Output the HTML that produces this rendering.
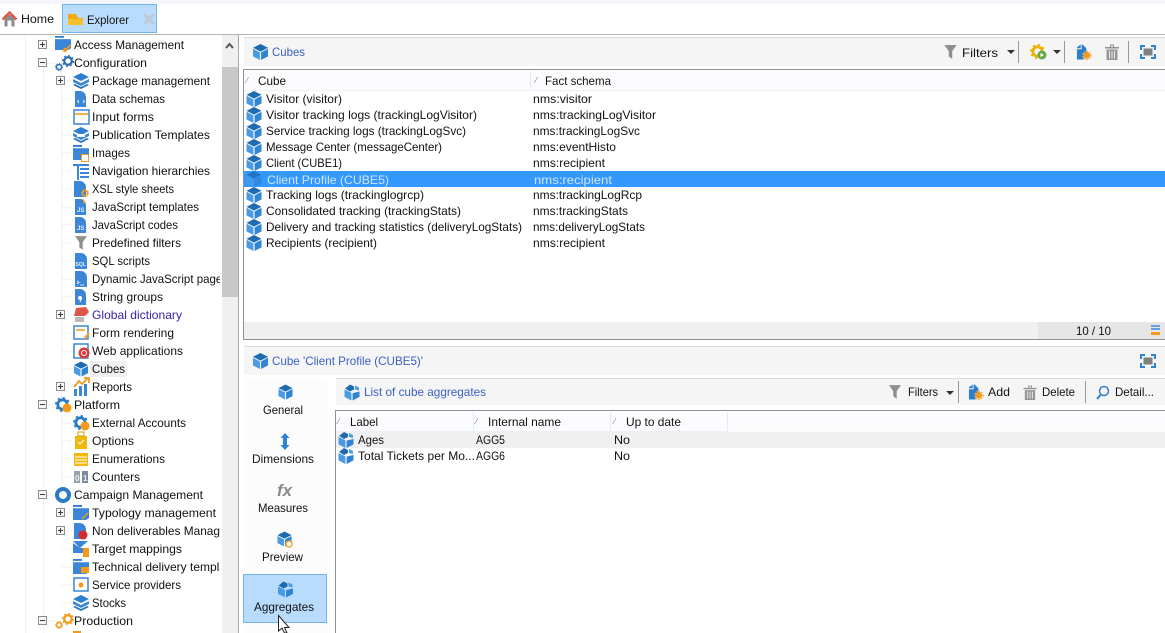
<!DOCTYPE html>
<html><head><meta charset="utf-8"><style>
html,body{margin:0;padding:0;background:#fff;width:1165px;height:633px;overflow:hidden}
svg{display:block}
text{font-family:"Liberation Sans",sans-serif;font-size:12px;fill:#111}
.t{fill:#3b5fc4}
.m{font-size:8px;fill:#777}
.i{font-size:6px;font-weight:bold;fill:#e6f0fb}
</style></head><body>
<svg width="1165" height="633" viewBox="0 0 1165 633" xmlns="http://www.w3.org/2000/svg">
<defs>
<clipPath id="tc"><rect x="0" y="34" width="220" height="600"/></clipPath>
<symbol id="cube" viewBox="0 0 16 16" overflow="visible"><path d="M8 0L15.500 3.800L8 7.600L.5 3.800Z" fill="#1f6bb0"/><path d="M.5 4.800L7.400 8.400V16L.5 12.400Z" fill="#4a9be3"/><path d="M15.500 4.800L8.600 8.400V16L15.500 12.400Z" fill="#2f84d3"/></symbol>
<symbol id="agg" viewBox="0 0 16 16" overflow="visible"><path d="M6 0L10 2V5L6 7L1 4Z" fill="#1f6bb0"/><path d="M11 1L15 3V6L11 5Z" fill="#4a9be3"/><path d="M.5 5L7.400 8.400V16L.5 12.400Z" fill="#4a9be3"/><path d="M15.500 7L8.600 8.600V16L15.500 12.400Z" fill="#2f84d3"/></symbol>
<symbol id="doc" viewBox="0 0 12 16" preserveAspectRatio="none" overflow="visible"><path d="M0 0H7L12 5V16H0Z" fill="#3b86d6"/><path d="M8 0L12 4H8Z" fill="#2f7fd0"/></symbol>
<symbol id="folder" viewBox="0 0 16 16" preserveAspectRatio="none" overflow="visible"><rect x="0" y="0" width="9" height="2" fill="#2f7fd0"/><path d="M0 3.500H16V14L13 16H0Z" fill="#3b86d6"/></symbol>
<symbol id="gear" viewBox="0 0 16 16" overflow="visible"><circle cx="8" cy="8" r="5" fill="none" stroke="currentColor" stroke-width="3"/><circle cx="8" cy="8" r="7" fill="none" stroke="currentColor" stroke-width="2" stroke-dasharray="2.400 3.100"/></symbol>
<symbol id="stack" viewBox="0 0 16 16" overflow="visible"><path d="M8 0L16 4L8 8L0 4Z" fill="#2f7fd0"/><path d="M0 6L8 10L16 6V9L8 13L0 9Z" fill="#3b86d6"/><path d="M2 11L8 14L14 11L16 12L8 16L0 12Z" fill="#2a73bd"/></symbol>
<symbol id="funnel" viewBox="0 0 14 16" overflow="visible"><path d="M0 0H14L9 7V16L5 13V7Z" fill="#8f8f8f"/></symbol>
<symbol id="trash" viewBox="0 0 14 16" overflow="visible"><path d="M0 3H14V4.500H0ZM5 .5H9V3H8V1.500H6V3H5Z" fill="#8f8f8f"/><path d="M1.500 5.500H12.500V16H1.500Z" fill="#959595"/><path d="M4.500 7V14.500M7 7V14.500M9.500 7V14.500" stroke="#eee" stroke-width="1"/></symbol>
<symbol id="fit" viewBox="0 0 16 14" overflow="visible"><path d="M1 5V1H5M11 1H15V5M15 9V13H11M5 13H1V9" fill="none" stroke="#2f84d8" stroke-width="2"/><rect x="3.500" y="3.500" width="9" height="7" fill="#808080"/></symbol>
<symbol id="add" viewBox="0 0 16 16" overflow="visible"><path d="M1 3L5 0V4H1ZM6 0H7L11 4V9H8V16H1V5H6Z" fill="#2f7fd0"/><circle cx="11.500" cy="11.500" r="3.500" fill="#f29a1e"/><circle cx="11.500" cy="11.500" r="4.500" fill="none" stroke="#f29a1e" stroke-width="1.200" stroke-dasharray="1.500 1.500"/></symbol>
<symbol id="plus" viewBox="0 0 9 9" overflow="visible"><rect x=".5" y=".5" width="8" height="8" fill="#f6f6f6" stroke="#8d8d8d"/><path d="M2 4.500H7M4.500 2V7" stroke="#3a3a3a"/></symbol>
<symbol id="minus" viewBox="0 0 9 9" overflow="visible"><rect x=".5" y=".5" width="8" height="8" fill="#f6f6f6" stroke="#8d8d8d"/><path d="M2 4.500H7" stroke="#3a3a3a"/></symbol>
</defs>

<!-- top bar -->
<rect width="1165" height="4" fill="#f3f5f9"/>
<rect y="4" width="1165" height="30" fill="#fff"/>
<rect y="34" width="1165" height="1" fill="#b5b5b5"/>
<path d="M4.500 15H14.500V26.500H11.500V20.500H7.500V26.500H4.500Z" fill="#8c8c8c"/><path d="M2.500 19.500L9.500 12.500L16.500 19.500" fill="none" stroke="#e0574a" stroke-width="2.400"/>
<text x="21" y="23" textLength="33" lengthAdjust="spacingAndGlyphs">Home</text>
<rect x="62.500" y="4.500" width="94" height="28" fill="#b9dcfd" stroke="#74b2ee"/>
<path d="M68 14V25H83V18H78L76 14Z" fill="#f4a90f"/><path d="M68 19H83V25H68Z" fill="#f6c02c"/>
<text x="87" y="24" textLength="42" lengthAdjust="spacingAndGlyphs">Explorer</text>
<path d="M144 14L154 24M154 14L144 24" stroke="#bfc9d2" stroke-width="3"/>

<!-- tree -->
<g stroke="#f1f1f1" fill="none">
<path d="M25.500 35V633M43.500 54V633M61.500 35V512M43.500 45H56M43.500 63H56M43.500 405H56M43.500 495H56M43.500 621H56"/>
<path d="M61.500 81H72M61.500 99H72M61.500 117H72M61.500 135H72M61.500 153H72M61.500 171H72M61.500 189H72M61.500 207H72M61.500 225H72M61.500 243H72M61.500 261H72M61.500 279H72M61.500 297H72M61.500 315H72M61.500 333H72M61.500 351H72M61.500 369H72M61.500 387H72M61.500 423H72M61.500 441H72M61.500 459H72M61.500 477H72M61.500 513H72M61.500 531H72M61.500 549H72M61.500 567H72M61.500 585H72M61.500 603H72"/>
</g>
<use href="#plus" x="38" y="40" width="9" height="9"/>
<use href="#minus" x="38" y="58" width="9" height="9"/>
<use href="#plus" x="56" y="76" width="9" height="9"/>
<use href="#plus" x="56" y="310" width="9" height="9"/>
<use href="#plus" x="56" y="382" width="9" height="9"/>
<use href="#minus" x="38" y="400" width="9" height="9"/>
<use href="#minus" x="38" y="490" width="9" height="9"/>
<use href="#plus" x="56" y="508" width="9" height="9"/>
<use href="#plus" x="56" y="526" width="9" height="9"/>
<use href="#minus" x="38" y="616" width="9" height="9"/>

<!-- tree icons -->
<use href="#folder" x="55" y="36" width="16" height="14"/><path d="M64 51L71 45" stroke="#f29a1e" stroke-width="1.800"/><circle cx="65" cy="50" r="2.200" fill="#f29a1e"/>
<g color="#2c6fb3"><use href="#gear" x="62" y="55" width="12" height="12"/><use href="#gear" x="55" y="63" width="8" height="8"/></g>
<use href="#stack" x="73" y="73" width="16" height="16"/>
<use href="#doc" x="75" y="91" width="11" height="16"/><path d="M79 100L77.500 101.500L79 103M83 100L84.500 101.500L83 103" stroke="#fff" fill="none" stroke-width=".8"/>
<rect x="74" y="110" width="15" height="14" fill="#fff" stroke="#3b86d6" stroke-width="1.500"/><rect x="75" y="113" width="13" height="2" fill="#f4b24a"/>
<use href="#stack" x="73" y="127" width="16" height="16"/><rect x="77" y="134" width="8" height="3" fill="#fff"/>
<use href="#folder" x="73" y="145" width="16" height="15"/><rect x="81.500" y="154.500" width="7" height="7" fill="#fff" stroke="#f29a1e"/>
<path d="M73 164H89V166H73ZM77 166H79V180H77ZM80 168H89V170H80ZM80 172H89V174H80ZM80 176H89V178H80Z" fill="#3b86d6"/>
<use href="#doc" x="74" y="181" width="12" height="16"/><use href="#gear" x="81" y="189" width="8" height="8" color="#f29a1e"/>
<use href="#doc" x="75" y="199" width="11" height="16"/><path d="M83 199L86 203H83Z" fill="#f29a1e"/><text x="77" y="212" class="i">JS</text>
<use href="#doc" x="75" y="217" width="11" height="16"/><text x="77" y="230" class="i">JS</text>
<use href="#funnel" x="75" y="236" width="12" height="14"/>
<use href="#doc" x="75" y="253" width="12" height="16"/><text x="75.500" y="266" class="i" style="font-size:5px">SQL</text>
<use href="#doc" x="75" y="271" width="12" height="16"/><path d="M77 281L79 282.500L77 284M80 285H84" stroke="#fff" fill="none" stroke-width=".8"/>
<use href="#doc" x="75" y="289" width="11" height="16"/><circle cx="80" cy="298" r="2" fill="#fff"/><path d="M81.500 298L80 302" stroke="#fff"/>
<path d="M76 308L86 307L89 312L85 316L74 316Z" fill="#e0574a"/><rect x="75" y="317" width="9" height="5" fill="#bbb"/>
<rect x="74" y="326" width="14" height="13" fill="#fff" stroke="#3b86d6" stroke-width="1.500"/><path d="M76 330H85" stroke="#f4b24a" stroke-width="2"/><path d="M84 339L89 333" stroke="#f29a1e" stroke-width="2"/>
<rect x="74" y="344" width="14" height="14" fill="#fff" stroke="#3b86d6" stroke-width="1.500"/><circle cx="84" cy="353" r="5.500" fill="#d93a3a"/><circle cx="84" cy="353" r="2.500" fill="none" stroke="#fff"/>
<rect x="90" y="361" width="37" height="16" fill="#f0f0f0"/>
<use href="#cube" x="73.500" y="361" width="15" height="16"/>
<path d="M74 396V389H77V396ZM79 396V386H82V396ZM84 396V384H87V396Z" fill="#3b86d6"/><path d="M74 387L79 381L82 384L88 378M84 378H89V383" fill="none" stroke="#f29a1e" stroke-width="1.800"/>
<use href="#gear" x="55" y="397" width="15" height="15" color="#2c7ac7"/><circle cx="67" cy="408" r="4.500" fill="#f29a1e"/>
<use href="#gear" x="73" y="415" width="15" height="15" color="#2c7ac7"/><circle cx="85" cy="426" r="4.500" fill="#f29a1e"/>
<rect x="75" y="436" width="12" height="13" fill="#efb90c"/><rect x="78" y="432" width="6" height="4" fill="none" stroke="#c8a00b"/><path d="M78 442L80 444L84 440" stroke="#fff" fill="none"/>
<rect x="74" y="453" width="14" height="13" fill="#efb90c"/><path d="M75 457H87M75 460H87M75 463H87" stroke="#fff"/>
<rect x="74" y="471" width="6" height="12" fill="#9aa3ad"/><rect x="82" y="471" width="6" height="12" fill="#7c8a99"/><text x="75" y="481" class="i" style="font-size:8px">0</text><text x="83" y="481" class="i" style="font-size:8px">1</text>
<circle cx="63" cy="495" r="6" fill="none" stroke="#2c7ac7" stroke-width="4"/>
<use href="#folder" x="73" y="505" width="16" height="15"/><path d="M82 519L88 513" stroke="#f29a1e" stroke-width="1.500"/>
<use href="#doc" x="74" y="523" width="12" height="16"/><circle cx="83" cy="535" r="4.500" fill="#d42b2b"/>
<path d="M73 541H88L80 548ZM73 543V553H84V548H80Z" fill="#3b86d6"/><rect x="83" y="548" width="6" height="9" fill="#f29a1e"/>
<use href="#folder" x="73" y="559" width="16" height="15"/><rect x="81" y="567" width="8" height="6" fill="#f29a1e"/>
<rect x="74" y="578" width="14" height="13" fill="#fff" stroke="#3b86d6" stroke-width="1.500"/><circle cx="81" cy="585" r="2.500" fill="#f29a1e"/>
<use href="#stack" x="73" y="595" width="16" height="16"/>
<g color="#f29a1e"><use href="#gear" x="62" y="613" width="12" height="12"/><use href="#gear" x="55" y="621" width="8" height="8"/></g>
<rect x="73" y="631" width="8" height="2" fill="#f29a1e"/>

<!-- tree text -->
<g clip-path="url(#tc)">
<text x="74" y="49" textLength="110" lengthAdjust="spacingAndGlyphs">Access Management</text>
<text x="74" y="67" textLength="73" lengthAdjust="spacingAndGlyphs">Configuration</text>
<text x="92" y="85" textLength="118" lengthAdjust="spacingAndGlyphs">Package management</text>
<text x="92" y="103" textLength="73" lengthAdjust="spacingAndGlyphs">Data schemas</text>
<text x="92" y="121" textLength="62" lengthAdjust="spacingAndGlyphs">Input forms</text>
<text x="92" y="139" textLength="118" lengthAdjust="spacingAndGlyphs">Publication Templates</text>
<text x="92" y="157" textLength="38" lengthAdjust="spacingAndGlyphs">Images</text>
<text x="92" y="175" textLength="118" lengthAdjust="spacingAndGlyphs">Navigation hierarchies</text>
<text x="92" y="193" textLength="82" lengthAdjust="spacingAndGlyphs">XSL style sheets</text>
<text x="92" y="211" textLength="107" lengthAdjust="spacingAndGlyphs">JavaScript templates</text>
<text x="92" y="229" textLength="86" lengthAdjust="spacingAndGlyphs">JavaScript codes</text>
<text x="92" y="247" textLength="89" lengthAdjust="spacingAndGlyphs">Predefined filters</text>
<text x="92" y="265" textLength="58" lengthAdjust="spacingAndGlyphs">SQL scripts</text>
<text x="92" y="283" textLength="136" lengthAdjust="spacingAndGlyphs">Dynamic JavaScript pages</text>
<text x="92" y="301" textLength="71" lengthAdjust="spacingAndGlyphs">String groups</text>
<text x="92" y="319" textLength="90" lengthAdjust="spacingAndGlyphs" style="fill:#3a1fa8">Global dictionary</text>
<text x="92" y="337" textLength="82" lengthAdjust="spacingAndGlyphs">Form rendering</text>
<text x="92" y="355" textLength="91" lengthAdjust="spacingAndGlyphs">Web applications</text>
<text x="92" y="373" textLength="33" lengthAdjust="spacingAndGlyphs">Cubes</text>
<text x="92" y="391" textLength="40" lengthAdjust="spacingAndGlyphs">Reports</text>
<text x="74" y="409" textLength="46" lengthAdjust="spacingAndGlyphs">Platform</text>
<text x="92" y="427" textLength="94" lengthAdjust="spacingAndGlyphs">External Accounts</text>
<text x="92" y="445" textLength="42" lengthAdjust="spacingAndGlyphs">Options</text>
<text x="92" y="463" textLength="73" lengthAdjust="spacingAndGlyphs">Enumerations</text>
<text x="92" y="481" textLength="48" lengthAdjust="spacingAndGlyphs">Counters</text>
<text x="74" y="499" textLength="129" lengthAdjust="spacingAndGlyphs">Campaign Management</text>
<text x="92" y="517" textLength="124" lengthAdjust="spacingAndGlyphs">Typology management</text>
<text x="92" y="535" textLength="161" lengthAdjust="spacingAndGlyphs">Non deliverables Management</text>
<text x="92" y="553" textLength="90" lengthAdjust="spacingAndGlyphs">Target mappings</text>
<text x="92" y="571" textLength="150" lengthAdjust="spacingAndGlyphs">Technical delivery templates</text>
<text x="92" y="589" textLength="89" lengthAdjust="spacingAndGlyphs">Service providers</text>
<text x="92" y="607" textLength="34" lengthAdjust="spacingAndGlyphs">Stocks</text>
<text x="74" y="625" textLength="59" lengthAdjust="spacingAndGlyphs">Production</text>
</g>

<!-- scrollbar -->
<rect x="222" y="35" width="16" height="598" fill="#f0f0f0"/>
<rect x="222" y="67" width="16" height="230" fill="#c8c8c8"/>
<path d="M226 48L229.500 44L233 48" fill="none" stroke="#555" stroke-width="2"/>
<rect x="238" y="35" width="1" height="598" fill="#a8a8a8"/>

<!-- Cubes panel -->
<rect x="244" y="37" width="921" height="29" fill="#f5f5f5"/>
<rect x="244" y="37" width="921" height="1" fill="#dcdcdc"/>
<use href="#cube" x="252.500" y="43.500" width="16" height="17"/>
<text x="272" y="56" class="t" textLength="33" lengthAdjust="spacingAndGlyphs">Cubes</text>
<use href="#funnel" x="944" y="45" width="13" height="14"/>
<text x="962" y="57" textLength="36" lengthAdjust="spacingAndGlyphs">Filters</text>
<path d="M1007 50H1015L1011 54Z" fill="#333"/>
<rect x="1018" y="41" width="1" height="22" fill="#9a9a9a"/>
<use href="#gear" x="1030" y="44" width="15" height="15" color="#e9b400"/><circle cx="1042" cy="55" r="4.500" fill="#6aa84f"/><path d="M1040.500 53V57L1044 55Z" fill="#fff"/>
<path d="M1053 50H1061L1057 54Z" fill="#333"/>
<rect x="1064" y="41" width="1" height="22" fill="#9a9a9a"/>
<use href="#add" x="1076" y="44" width="15" height="16"/>
<use href="#trash" x="1105" y="44" width="14" height="16"/>
<rect x="1128" y="41" width="1" height="22" fill="#9a9a9a"/>
<use href="#fit" x="1140" y="45" width="16" height="14"/>

<!-- Cubes table -->
<rect x="243.500" y="69.500" width="925" height="270" fill="#fff" stroke="#8b9098"/>
<rect x="244" y="70" width="921" height="20" fill="#fcfcfe"/>
<rect x="244" y="90" width="921" height="1" fill="#e8f0f8"/>
<rect x="530" y="71" width="1" height="19" fill="#e3ebf3"/>
<text x="246.500" y="83" class="m">⁄</text>
<text x="535.500" y="83" class="m">⁄</text>
<text x="258" y="85" textLength="28" lengthAdjust="spacingAndGlyphs">Cube</text>
<text x="545" y="85" textLength="66" lengthAdjust="spacingAndGlyphs">Fact schema</text>
<rect x="244" y="171" width="921" height="16" fill="#3399ff"/>
<use href="#cube" x="246" y="90.500" width="16" height="17"/>
<use href="#cube" x="246" y="106.500" width="16" height="17"/>
<use href="#cube" x="246" y="122.500" width="16" height="17"/>
<use href="#cube" x="246" y="138.500" width="16" height="17"/>
<use href="#cube" x="246" y="154.500" width="16" height="17"/>
<use href="#cube" x="246" y="170.500" width="16" height="17" opacity=".75"/>
<use href="#cube" x="246" y="186.500" width="16" height="17"/>
<use href="#cube" x="246" y="202.500" width="16" height="17"/>
<use href="#cube" x="246" y="218.500" width="16" height="17"/>
<use href="#cube" x="246" y="234.500" width="16" height="17"/>
<text x="266" y="103" textLength="76" lengthAdjust="spacingAndGlyphs">Visitor (visitor)</text>
<text x="266" y="119" textLength="211" lengthAdjust="spacingAndGlyphs">Visitor tracking logs (trackingLogVisitor)</text>
<text x="266" y="135" textLength="200" lengthAdjust="spacingAndGlyphs">Service tracking logs (trackingLogSvc)</text>
<text x="266" y="151" textLength="176" lengthAdjust="spacingAndGlyphs">Message Center (messageCenter)</text>
<text x="266" y="167" textLength="76" lengthAdjust="spacingAndGlyphs">Client (CUBE1)</text>
<text x="267" y="184" textLength="122" lengthAdjust="spacingAndGlyphs" style="fill:#cfe5fb">Client Profile (CUBE5)</text>
<text x="266" y="199" textLength="158" lengthAdjust="spacingAndGlyphs">Tracking logs (trackinglogrcp)</text>
<text x="266" y="215" textLength="195" lengthAdjust="spacingAndGlyphs">Consolidated tracking (trackingStats)</text>
<text x="266" y="231" textLength="256" lengthAdjust="spacingAndGlyphs">Delivery and tracking statistics (deliveryLogStats)</text>
<text x="266" y="247" textLength="111" lengthAdjust="spacingAndGlyphs">Recipients (recipient)</text>
<text x="533" y="103" textLength="59" lengthAdjust="spacingAndGlyphs">nms:visitor</text>
<text x="533" y="119" textLength="123" lengthAdjust="spacingAndGlyphs">nms:trackingLogVisitor</text>
<text x="533" y="135" textLength="107" lengthAdjust="spacingAndGlyphs">nms:trackingLogSvc</text>
<text x="533" y="151" textLength="83" lengthAdjust="spacingAndGlyphs">nms:eventHisto</text>
<text x="533" y="167" textLength="72" lengthAdjust="spacingAndGlyphs">nms:recipient</text>
<text x="534" y="184" textLength="78" lengthAdjust="spacingAndGlyphs" style="fill:#cfe5fb">nms:recipient</text>
<text x="533" y="199" textLength="109" lengthAdjust="spacingAndGlyphs">nms:trackingLogRcp</text>
<text x="533" y="215" textLength="95" lengthAdjust="spacingAndGlyphs">nms:trackingStats</text>
<text x="533" y="231" textLength="112" lengthAdjust="spacingAndGlyphs">nms:deliveryLogStats</text>
<text x="533" y="247" textLength="72" lengthAdjust="spacingAndGlyphs">nms:recipient</text>
<rect x="244" y="322" width="921" height="17" fill="#f0f0f0"/>
<rect x="1038" y="322" width="127" height="17" fill="#e6e6e6"/>
<text x="1076" y="335" textLength="35" lengthAdjust="spacingAndGlyphs">10 / 10</text>
<path d="M1151 326H1160M1151 329H1160" stroke="#3b86d6" stroke-width="1.500"/><rect x="1151" y="332" width="9" height="3" fill="#f29a1e"/>

<!-- lower panel -->
<rect x="244" y="346" width="921" height="29" fill="#f5f5f5"/>
<rect x="244" y="346" width="921" height="1" fill="#dcdcdc"/>
<use href="#cube" x="252.500" y="352.500" width="16" height="17"/>
<text x="272" y="365" class="t" textLength="151" lengthAdjust="spacingAndGlyphs">Cube 'Client Profile (CUBE5)'</text>
<use href="#fit" x="1140" y="354" width="16" height="14"/>

<!-- side tabs -->
<rect x="243" y="378" width="84" height="255" fill="#fcfcfc"/>
<use href="#cube" x="278" y="384" width="15" height="16"/>
<path d="M285 433L289.500 438H287V445H289.500L285 450L280.500 445H283V438H280.500Z" fill="#2f84d3"/>
<text x="277" y="496" style="font-style:italic;font-weight:bold;font-size:17px;fill:#8a8a8a">fx</text>
<use href="#cube" x="277" y="531" width="15" height="16"/><circle cx="289" cy="544" r="3" fill="#fcfcfc" stroke="#f29a1e" stroke-width="1.300"/>
<rect x="243.500" y="574.500" width="83" height="48" fill="#b9dcfd" stroke="#74b2ee"/>
<use href="#agg" x="277.500" y="581" width="16" height="17"/>
<text x="263" y="414" textLength="40" lengthAdjust="spacingAndGlyphs">General</text>
<text x="252" y="463" textLength="62" lengthAdjust="spacingAndGlyphs">Dimensions</text>
<text x="258" y="512" textLength="50" lengthAdjust="spacingAndGlyphs">Measures</text>
<text x="262" y="561" textLength="41" lengthAdjust="spacingAndGlyphs">Preview</text>
<text x="254" y="611" textLength="60" lengthAdjust="spacingAndGlyphs">Aggregates</text>

<!-- aggregates toolbar -->
<rect x="336" y="378" width="829" height="27" fill="#f5f5f5"/>
<rect x="336" y="378" width="829" height="1" fill="#dcdcdc"/>
<use href="#agg" x="344" y="384" width="16" height="17"/>
<text x="364" y="396" class="t" textLength="122" lengthAdjust="spacingAndGlyphs">List of cube aggregates</text>
<use href="#funnel" x="889" y="385" width="12" height="14"/>
<text x="908" y="396" textLength="30" lengthAdjust="spacingAndGlyphs">Filters</text>
<path d="M946 391H954L950 395Z" fill="#333"/>
<rect x="958" y="381" width="1" height="22" fill="#9a9a9a"/>
<use href="#add" x="968" y="384" width="15" height="16"/>
<text x="988" y="396" textLength="22" lengthAdjust="spacingAndGlyphs">Add</text>
<use href="#trash" x="1023" y="385" width="14" height="15"/>
<text x="1042" y="396" textLength="33" lengthAdjust="spacingAndGlyphs">Delete</text>
<rect x="1085" y="381" width="1" height="22" fill="#9a9a9a"/>
<circle cx="1104" cy="391" r="4.500" fill="none" stroke="#2f7fd0" stroke-width="1.500"/><path d="M1100.500 395L1097 399" stroke="#2f7fd0" stroke-width="2"/>
<text x="1115" y="396" textLength="39" lengthAdjust="spacingAndGlyphs">Detail...</text>

<!-- aggregates table -->
<rect x="335.500" y="410.500" width="835" height="230" fill="#fff" stroke="#8b9098"/>
<rect x="336" y="411" width="829" height="20" fill="#fcfcfe"/>
<rect x="336" y="431" width="392" height="1" fill="#e8f0f8"/>
<path d="M473.500 412V431M610.500 412V431M727.500 412V431" stroke="#e3ebf3"/>
<text x="338" y="424" class="m">⁄</text>
<text x="476" y="424" class="m">⁄</text>
<text x="614" y="424" class="m">⁄</text>
<text x="350" y="426" textLength="28" lengthAdjust="spacingAndGlyphs">Label</text>
<text x="488" y="426" textLength="73" lengthAdjust="spacingAndGlyphs">Internal name</text>
<text x="626" y="426" textLength="55" lengthAdjust="spacingAndGlyphs">Up to date</text>
<rect x="336" y="432" width="829" height="16" fill="#f0f0f0"/>
<use href="#agg" x="338" y="431.500" width="16" height="17"/>
<use href="#agg" x="338" y="447.500" width="16" height="17"/>
<text x="358" y="444" textLength="26" lengthAdjust="spacingAndGlyphs">Ages</text>
<text x="476" y="444" textLength="29" lengthAdjust="spacingAndGlyphs">AGG5</text>
<text x="614" y="444" textLength="16" lengthAdjust="spacingAndGlyphs">No</text>
<text x="358" y="460" textLength="117" lengthAdjust="spacingAndGlyphs">Total Tickets per Mo...</text>
<text x="476" y="460" textLength="29" lengthAdjust="spacingAndGlyphs">AGG6</text>
<text x="614" y="460" textLength="16" lengthAdjust="spacingAndGlyphs">No</text>

<!-- cursor -->
<path d="M278.500 615.500V631L282 628L284.500 633H287L284.500 627.500H289Z" fill="#fff" stroke="#222" stroke-width="1"/>
</svg>
</body></html>
